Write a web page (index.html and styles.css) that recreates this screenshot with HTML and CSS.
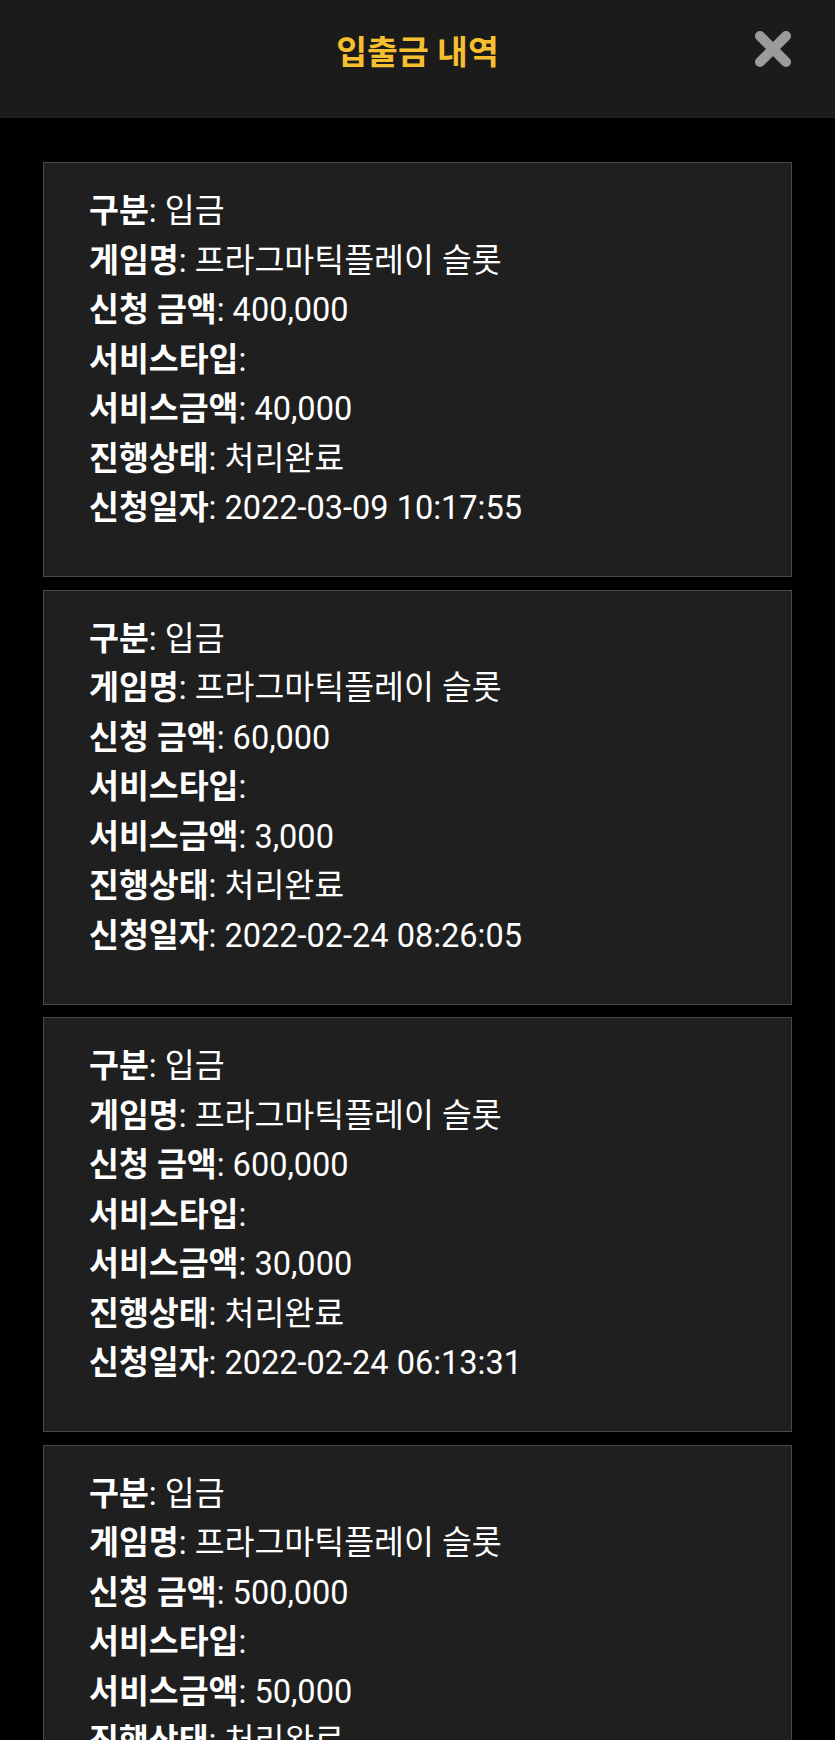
FILE: index.html
```html
<!DOCTYPE html>
<html lang="ko">
<head>
  <meta charset="UTF-8">
  <meta name="viewport" content="width=device-width, initial-scale=1.0">
  <title>입출금 내역</title>
  <link rel="stylesheet" href="styles.css">
</head>
<body>
  <header class="top-bar">
    <span></span>
    <h1 class="title">입출금 내역</h1>
    <button class="close-button" aria-label="닫기">
      <svg width="38" height="38" viewBox="0 0 38 38">
        <path d="M6 6 L32 32 M32 6 L6 32" stroke="#9b9b9b" stroke-width="10" stroke-linecap="round" fill="none"/>
      </svg>
    </button>
  </header>

  <main class="history">
    <div class="record">
      <div><b>구분</b>: 입금</div>
      <div><b>게임명</b>: 프라그마틱플레이 슬롯</div>
      <div><b>신청 금액</b>: 400,000</div>
      <div><b>서비스타입</b>:</div>
      <div><b>서비스금액</b>: 40,000</div>
      <div><b>진행상태</b>: 처리완료</div>
      <div><b>신청일자</b>: 2022-03-09 10:17:55</div>
    </div>

    <div class="record">
      <div><b>구분</b>: 입금</div>
      <div><b>게임명</b>: 프라그마틱플레이 슬롯</div>
      <div><b>신청 금액</b>: 60,000</div>
      <div><b>서비스타입</b>:</div>
      <div><b>서비스금액</b>: 3,000</div>
      <div><b>진행상태</b>: 처리완료</div>
      <div><b>신청일자</b>: 2022-02-24 08:26:05</div>
    </div>

    <div class="record">
      <div><b>구분</b>: 입금</div>
      <div><b>게임명</b>: 프라그마틱플레이 슬롯</div>
      <div><b>신청 금액</b>: 600,000</div>
      <div><b>서비스타입</b>:</div>
      <div><b>서비스금액</b>: 30,000</div>
      <div><b>진행상태</b>: 처리완료</div>
      <div><b>신청일자</b>: 2022-02-24 06:13:31</div>
    </div>

    <div class="record">
      <div><b>구분</b>: 입금</div>
      <div><b>게임명</b>: 프라그마틱플레이 슬롯</div>
      <div><b>신청 금액</b>: 500,000</div>
      <div><b>서비스타입</b>:</div>
      <div><b>서비스금액</b>: 50,000</div>
      <div><b>진행상태</b>: 처리완료</div>
      <div><b>신청일자</b>: 2022-02-23 21:40:12</div>
    </div>
  </main>
</body>
</html>
```

FILE: styles.css
```css
body {
  margin: 0;
  background-color: #000;
  color: #fff;
  font-family: Roboto, "Noto Sans CJK KR", sans-serif;
}
.top-bar {
  display: grid;
  grid-template-columns: 1fr auto 1fr;
  align-items: start;
  height: 118px;
  padding: 0 43px 0 43px;
  background-color: #1b1b1b;
  border-bottom: 1px solid #202020;
  box-sizing: border-box;
}
.title {
  margin: 33px 0 0 0;
  font-size: 33.5px;
  line-height: 40px;
  font-weight: 700;
  color: #f5bf30;
}
.close-button {
  justify-self: end;
  margin-top: 30px;
  padding: 0;
  border: none;
  background: none;
  cursor: pointer;
  line-height: 0;
}
.history {
  display: flex;
  flex-direction: column;
  gap: 12.5px;
  padding: 44px 43px 0 43px;
}
.record {
  padding: 24px 45px 42.5px 45px;
  background-color: #1f1f1f;
  border: 1px solid #494949;
  font-size: 32.5px;
  line-height: 49.5px;
}
.record b {
  font-weight: 700;
}
```
